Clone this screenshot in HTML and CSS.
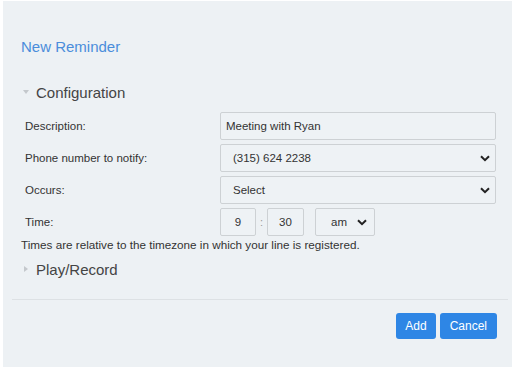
FILE: index.html
```
<!DOCTYPE html>
<html lang="en">
    <head>
    <meta charset="utf-8">
    <title>New Reminder</title>
    <link rel="stylesheet" href="styles.css">
    </head>
    <body>
        <div class="panel">
            <h2 class="title">New Reminder</h2>

            <div class="section-head">
                <span class="caret caret-down"></span>
                <span>Configuration</span>
            </div>

            <div class="form">
                <label for="descField">Description:</label>
                <input class="field" type="text" id="descField" value="Meeting with Ryan">

                <label>Phone number to notify:</label>
                <div class="field select">
                    <span>(315) 624 2238</span>
                    <svg width="10" height="7" viewBox="0 0 10 7"><path d="M1 1.2 L5 5.2 L9 1.2" fill="none" stroke="#222" stroke-width="2"/></svg>
                </div>

                <label>Occurs:</label>
                <div class="field select">
                    <span>Select</span>
                    <svg width="10" height="7" viewBox="0 0 10 7"><path d="M1 1.2 L5 5.2 L9 1.2" fill="none" stroke="#222" stroke-width="2"/></svg>
                </div>

                <label>Time:</label>
                <div class="time">
                    <div class="field num hour">9</div>
                    <span class="colon">:</span>
                    <div class="field num minute">30</div>
                    <div class="field select ampm">
                        <span>am</span>
                        <svg width="10" height="7" viewBox="0 0 10 7"><path d="M1 1.2 L5 5.2 L9 1.2" fill="none" stroke="#222" stroke-width="2"/></svg>
                    </div>
                </div>
            </div>

            <p class="note">Times are relative to the timezone in which your line is registered.</p>

            <div class="section-head play">
                <span class="caret caret-right"></span>
                <span>Play/Record</span>
            </div>

            <hr class="divider">

            <div class="actions">
                <button type="button" class="btn">Add</button>
                <button type="button" class="btn btn-cancel">Cancel</button>
            </div>
        </div>
    </body>
</html>
```

FILE: styles.css
```
html, body {
    margin: 0;
    background: #ffffff;
    font-family: "Liberation Sans", Arial, sans-serif;
    color: #333;
}

.panel {
    margin: 1px 3px 0 3px;
    width: 509px;
    height: 366px;
    background: #edf1f4;
    overflow: hidden;
}

.title {
    margin: 0;
    padding: 38px 0 0 18px;
    font-size: 15px;
    line-height: 16px;
    font-weight: normal;
    color: #4a8ddb;
}

.section-head {
    display: flex;
    align-items: center;
    margin-top: 27px;
    padding-left: 20px;
    height: 20px;
    font-size: 15px;
    color: #444;
}

.caret {
    display: inline-block;
    width: 0;
    height: 0;
    margin-right: 7px;
}
.caret-down {
    border-left: 3px solid transparent;
    border-right: 3px solid transparent;
    border-top: 4px solid #c4c8cc;
}
.caret-right {
    border-top: 3px solid transparent;
    border-bottom: 3px solid transparent;
    border-left: 4px solid #c4c8cc;
    margin-left: 1px;
    margin-right: 8px;
}

.form {
    display: grid;
    grid-template-columns: 195px 276px;
    row-gap: 4px;
    margin-top: 10px;
    padding-left: 22px;
}

.form label {
    display: flex;
    align-items: center;
    height: 28px;
    font-size: 11.5px;
    color: #333;
}

.field {
    box-sizing: border-box;
    height: 28px;
    border: 1px solid #cdd1d4;
    border-radius: 2px;
    background: #eef2f5;
    font-family: "Liberation Sans", Arial, sans-serif;
    font-size: 11.5px;
    color: #333;
}

input.field {
    width: 100%;
    padding: 0 5px;
    outline: none;
}

.select {
    display: flex;
    align-items: center;
    justify-content: space-between;
    padding: 0 5px 0 12px;
}

.time {
    display: flex;
    align-items: center;
}

.num {
    display: flex;
    align-items: center;
    justify-content: center;
}
.hour {
    width: 36px;
}
.minute {
    width: 37px;
}
.colon {
    width: 11px;
    text-align: center;
    font-size: 11px;
    color: #999;
}
.ampm {
    width: 60px;
    margin-left: 11px;
    padding: 0 7px 0 15px;
}

.note {
    margin: 2px 0 0 18px;
    font-size: 11.7px;
    line-height: 14px;
    color: #333;
}

.play {
    margin-top: 7px;
}

.divider {
    margin: 20px 4px 0 9px;
    border: none;
    border-top: 1px solid #dde1e4;
    height: 0;
}

.actions {
    display: flex;
    justify-content: flex-end;
    gap: 4px;
    margin-top: 13px;
    padding-right: 15px;
}

.btn {
    height: 26px;
    padding: 0 9px;
    border: none;
    border-radius: 3px;
    background: #2e86e5;
    color: #ffffff;
    font-family: "Liberation Sans", Arial, sans-serif;
    font-size: 12px;
}
.btn-cancel {
    padding: 0 10px;
}
```
